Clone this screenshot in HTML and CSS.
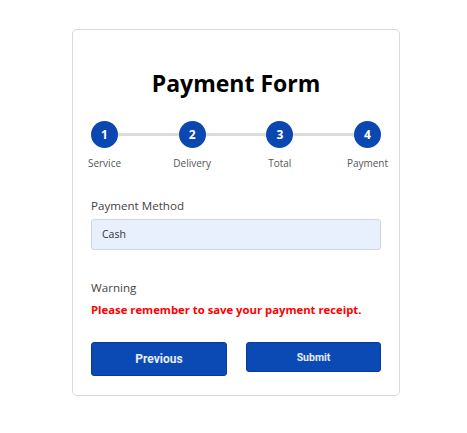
FILE: index.html
```
<!DOCTYPE html>
<html>
<head>
<meta charset="utf-8">
<link rel="stylesheet" href="styles.css">
</head>
<body>
<div class="card">
  <h1 class="title">Payment Form</h1>
  <div class="track">
    <div class="dot">1</div><div class="bar"></div>
    <div class="dot">2</div><div class="bar"></div>
    <div class="dot">3</div><div class="bar"></div>
    <div class="dot">4</div>
  </div>
  <div class="labels">
    <div class="lab"><span>Service</span></div>
    <div class="lab"><span>Delivery</span></div>
    <div class="lab"><span>Total</span></div>
    <div class="lab"><span>Payment</span></div>
  </div>
  <div class="field-label">Payment Method</div>
  <div class="input">Cash</div>
  <div class="warn-label">Warning</div>
  <div class="warn">Please remember to save your payment receipt.</div>
  <div class="buttons">
    <button class="btn prev">Previous</button>
    <button class="btn submit">Submit</button>
  </div>
</div>
</body>
</html>
```
FILE: styles.css
```
html, body { margin: 0; padding: 0; background: #fff; }
body { font-family: "Open Sans", "Noto Sans", sans-serif; color: #333; }
.card {
  box-sizing: border-box;
  width: 328px;
  height: 367px;
  margin: 29px 0 0 72px;
  border: 1px solid #d9d9d9;
  border-radius: 5px;
  padding: 0 18px;
  display: flex;
  flex-direction: column;
}
.title {
  margin: 36px 0 0;
  font-size: 23px;
  line-height: 34px;
  font-weight: 700;
  text-align: center;
  color: #000;
}
.track {
  margin-top: 21px;
  display: flex;
  align-items: center;
}
.dot {
  width: 27px; height: 27px;
  border-radius: 50%;
  background: #0b47b1;
  color: #fff;
  font-size: 12px;
  font-weight: 700;
  display: flex; align-items: center; justify-content: center;
  flex: none;
}
.bar { flex: 1; height: 3px; background: #dcdcdc; }
.labels { display: flex; justify-content: space-between; margin-top: 7px; }
.lab { width: 27px; display: flex; justify-content: center; }
.lab span { white-space: nowrap; font-size: 10px; line-height: 16px; color: #555; }
.field-label { margin-top: 26px; font-size: 11.6px; line-height: 18px; color: #444; }
.input {
  box-sizing: border-box;
  margin-top: 4px;
  height: 31px;
  background: #e8f0fe;
  border: 1px solid #cfd6e0;
  border-radius: 3px;
  padding: 0 10px;
  font-size: 10.5px;
  line-height: 29px;
  color: #333;
}
.warn-label { margin-top: 29px; font-size: 11.6px; line-height: 18px; color: #444; }
.warn { margin-top: 5px; font-size: 11.3px; line-height: 16px; font-weight: 700; color: #ff0000; white-space: nowrap; }
.buttons { margin-top: 24px; display: flex; justify-content: space-between; align-items: flex-start; }
.btn {
  border: 1px solid #08389a;
  border-radius: 3px;
  background: #0b4ab4;
  color: #e8ecf8;
  padding: 0;
  cursor: pointer;
}
.prev { width: 136px; height: 34px; font-family: Roboto, sans-serif; font-size: 12px; font-weight: 700; }
.submit { width: 135px; height: 30px; font-family: Roboto, sans-serif; font-size: 10.5px; font-weight: 700; }
```
